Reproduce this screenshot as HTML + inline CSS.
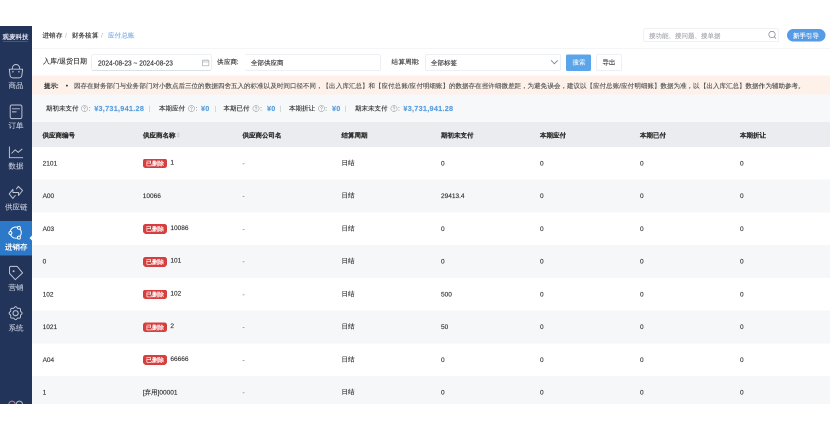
<!DOCTYPE html>
<html><head><meta charset="utf-8"><style>
*{margin:0;padding:0;box-sizing:border-box}
html,body{width:830px;height:430px;background:#fff;overflow:hidden}
#root{position:absolute;left:0;top:0;width:1660px;height:860px;transform:scale(0.5);transform-origin:0 0;will-change:transform;font-family:"Liberation Sans",sans-serif;color:#333}
#root div{position:absolute}
.t{white-space:nowrap;line-height:1;-webkit-text-stroke:0.3px currentColor}
</style></head><body><div id="root">
<div style="left:0.00px;top:52.00px;width:64.00px;height:756.00px;background:#22345a"></div>
<div style="left:0.00px;top:441.60px;width:64.00px;height:69.40px;background:#2b79c8"></div>
<div style="left:58.80px;top:471.20px;width:0;height:0;border-top:5.60px solid transparent;border-bottom:5.60px solid transparent;border-right:5.40px solid #fff"></div>
<div class="t" style="left:4.80px;top:68.00px;font-size:12.5px;color:#e2e6ee;font-weight:bold;letter-spacing:0.2px;-webkit-text-stroke:0">观麦科技</div>
<div style="left:5.60px;top:82.60px;width:50.00px;height:1.00px;background:#6c7896"></div>
<div class="t" style="left:0;top:162.60px;width:64.00px;text-align:center;font-size:15px;-webkit-text-stroke:0.15px currentColor;color:#ccd2de;font-weight:500">商品</div>
<div class="t" style="left:0;top:243.40px;width:64.00px;text-align:center;font-size:15px;-webkit-text-stroke:0.15px currentColor;color:#ccd2de;font-weight:500">订单</div>
<div class="t" style="left:0;top:324.20px;width:64.00px;text-align:center;font-size:15px;-webkit-text-stroke:0.15px currentColor;color:#ccd2de;font-weight:500">数据</div>
<div class="t" style="left:0;top:406.20px;width:64.00px;text-align:center;font-size:15px;-webkit-text-stroke:0.15px currentColor;color:#ccd2de;font-weight:500">供应链</div>
<div class="t" style="left:0;top:485.80px;width:64.00px;text-align:center;font-size:15px;-webkit-text-stroke:0.15px currentColor;color:#fff;-webkit-text-stroke:0.5px currentColor">进销存</div>
<div class="t" style="left:0;top:567.40px;width:64.00px;text-align:center;font-size:15px;-webkit-text-stroke:0.15px currentColor;color:#ccd2de;font-weight:500">营销</div>
<div class="t" style="left:0;top:648.40px;width:64.00px;text-align:center;font-size:15px;-webkit-text-stroke:0.15px currentColor;color:#ccd2de;font-weight:500">系统</div>
<svg style="position:absolute;left:0;top:0" width="64" height="860" viewBox="0 0 32 430" fill="none" stroke="#c3c9d6" stroke-width="0.95" stroke-linecap="round" stroke-linejoin="round">
 <path d="M12.3 69 V68.2 A3.7 3.7 0 0 1 19.7 68.2 V69"/>
 <path d="M9.3 69.2 H22.6 L21.9 75 Q21.6 77.9 18.8 77.9 H13.1 Q10.3 77.9 10 75 Z"/>
 <circle cx="12.9" cy="71.8" r="0.75" fill="#c3c9d6" stroke="none"/>
 <circle cx="18.9" cy="71.8" r="0.75" fill="#c3c9d6" stroke="none"/>
 <rect x="10.2" y="105" width="11.7" height="13.6" rx="1.6"/>
 <path d="M12.3 108.8 H19.6 M12.3 111.9 H16.2"/>
 <path d="M9.4 146.9 V157.7 H22.7"/>
 <path d="M11.8 153.2 L15.2 149.8 L18.2 152.4 L22 149.1"/>
 <path d="M16.5 188.9 L18.3 186.4 L22.6 190.5 L18.5 195.4 L18.5 192.5 L12.9 192.5 L12.9 189.3 L9.2 193.9 L12.9 198.4 L15.3 195.5"/>
 <path d="M9.5 267.8 Q9.5 266.4 10.9 266.4 H17.2 L22.6 272.9 L15.3 279.7 L9.6 273.5 Z"/>
 <circle cx="13.6" cy="271.2" r="0.95" fill="#c3c9d6" stroke="none"/>
 <path d="M15.60 306.70 L15.85 306.73 L16.10 306.83 L16.33 306.99 L16.55 307.19 L16.75 307.41 L16.93 307.64 L17.11 307.86 L17.27 308.05 L17.44 308.20 L17.63 308.30 L17.83 308.36 L18.06 308.38 L18.31 308.36 L18.59 308.33 L18.88 308.29 L19.18 308.28 L19.47 308.29 L19.75 308.34 L19.99 308.45 L20.20 308.60 L20.35 308.81 L20.46 309.05 L20.51 309.33 L20.52 309.62 L20.51 309.92 L20.47 310.21 L20.44 310.49 L20.42 310.74 L20.44 310.97 L20.50 311.17 L20.60 311.36 L20.75 311.53 L20.94 311.69 L21.16 311.87 L21.39 312.05 L21.61 312.25 L21.81 312.47 L21.97 312.70 L22.07 312.95 L22.10 313.20 L22.07 313.45 L21.97 313.70 L21.81 313.93 L21.61 314.15 L21.39 314.35 L21.16 314.53 L20.94 314.71 L20.75 314.87 L20.60 315.04 L20.50 315.23 L20.44 315.43 L20.42 315.66 L20.44 315.91 L20.47 316.19 L20.51 316.48 L20.52 316.78 L20.51 317.07 L20.46 317.35 L20.35 317.59 L20.20 317.80 L19.99 317.95 L19.75 318.06 L19.47 318.11 L19.18 318.12 L18.88 318.11 L18.59 318.07 L18.31 318.04 L18.06 318.02 L17.83 318.04 L17.63 318.10 L17.44 318.20 L17.27 318.35 L17.11 318.54 L16.93 318.76 L16.75 318.99 L16.55 319.21 L16.33 319.41 L16.10 319.57 L15.85 319.67 L15.60 319.70 L15.35 319.67 L15.10 319.57 L14.87 319.41 L14.65 319.21 L14.45 318.99 L14.27 318.76 L14.09 318.54 L13.93 318.35 L13.76 318.20 L13.57 318.10 L13.37 318.04 L13.14 318.02 L12.89 318.04 L12.61 318.07 L12.32 318.11 L12.02 318.12 L11.73 318.11 L11.45 318.06 L11.21 317.95 L11.00 317.80 L10.85 317.59 L10.74 317.35 L10.69 317.07 L10.68 316.78 L10.69 316.48 L10.73 316.19 L10.76 315.91 L10.78 315.66 L10.76 315.43 L10.70 315.23 L10.60 315.04 L10.45 314.87 L10.26 314.71 L10.04 314.53 L9.81 314.35 L9.59 314.15 L9.39 313.93 L9.23 313.70 L9.13 313.45 L9.10 313.20 L9.13 312.95 L9.23 312.70 L9.39 312.47 L9.59 312.25 L9.81 312.05 L10.04 311.87 L10.26 311.69 L10.45 311.53 L10.60 311.36 L10.70 311.17 L10.76 310.97 L10.78 310.74 L10.76 310.49 L10.73 310.21 L10.69 309.92 L10.68 309.62 L10.69 309.33 L10.74 309.05 L10.85 308.81 L11.00 308.60 L11.21 308.45 L11.45 308.34 L11.73 308.29 L12.02 308.28 L12.32 308.29 L12.61 308.33 L12.89 308.36 L13.14 308.38 L13.37 308.36 L13.57 308.30 L13.76 308.20 L13.93 308.05 L14.09 307.86 L14.27 307.64 L14.45 307.41 L14.65 307.19 L14.87 306.99 L15.10 306.83 L15.35 306.73Z"/>
 <circle cx="15.6" cy="313.2" r="2.6" stroke-width="1.05"/>
 <circle cx="12" cy="404.2" r="3.1" stroke="#b98a9a"/>
 <circle cx="19.4" cy="404.2" r="3.1" stroke="#b9c4c0"/>
</svg>
<svg style="position:absolute;left:0;top:0" width="64" height="860" viewBox="0 0 32 430" fill="none" stroke="#fff" stroke-width="0.95">
 <circle cx="15.7" cy="232.6" r="5.6"/>
 <circle cx="18.9" cy="227.8" r="1.5" fill="#2b79c8"/>
 <circle cx="10.4" cy="233" r="1.5" fill="#2b79c8"/>
 <circle cx="18.9" cy="237.6" r="1.5" fill="#2b79c8"/>
</svg>
<div style="left:64.00px;top:96.00px;width:1596.00px;height:1.20px;background:#e9ebef"></div>
<div class="t" style="left:85.00px;top:64.40px;font-size:13px;letter-spacing:0.3px;color:#333">进销存<span style="color:#c0c4cc;margin:0 10px 0 5px">/</span>财务核算<span style="color:#c0c4cc;margin:0 10px 0 5px">/</span><span style="color:#7eb0e6">应付总账</span></div>
<div style="left:1286.80px;top:56.80px;width:271.20px;height:27.00px;border:1px solid #dfe2e8;border-radius:3px;background:#fff"></div>
<div class="t" style="left:1298.40px;top:64.80px;font-size:13px;color:#a8abb2">搜功能、搜问题、搜单据</div>
<svg style="position:absolute;left:1532.00px;top:58.00px" width="24" height="24" viewBox="0 0 12 12" fill="none" stroke="#8a8f99" stroke-width="0.8" stroke-linecap="round"><circle cx="6" cy="5.5" r="3.2"/><path d="M8.3 7.8 L9.8 9.4"/></svg>
<div style="left:1574.40px;top:58.00px;width:77.00px;height:25.40px;background:#559be6;border-radius:13px"></div>
<div class="t" style="left:1586.00px;top:64.80px;font-size:13.4px;color:#fff">新手引导</div>
<div class="t" style="left:86.20px;top:116.40px;font-size:13.5px;color:#333">入库/退货日期</div>
<div style="left:183.40px;top:108.60px;width:240.00px;height:32.20px;border:1px solid #dcdfe6;border-radius:3px;background:#fff"></div>
<div class="t" style="left:195.60px;top:117.80px;font-size:15.5px;color:#333;transform:scaleX(0.85);transform-origin:0 0">2024-08-23 ~ 2024-08-23</div>
<svg style="position:absolute;left:403.00px;top:118.00px" width="16" height="16" viewBox="0 0 8 8" fill="none" stroke="#9aa0a8" stroke-width="0.6"><rect x="0.8" y="1.2" width="6.6" height="5.6" rx="0.6"/><path d="M0.8 3 H7.4 M2.6 0.5 V1.8 M5.6 0.5 V1.8"/></svg>
<div class="t" style="left:434.40px;top:117.00px;font-size:13px;color:#333;letter-spacing:0.2px">供应商<span style='margin-left:-1px'>:</span></div>
<div style="left:489.20px;top:108.60px;width:272.80px;height:32.20px;border:1px solid #dcdfe6;border-radius:3px;background:#fff"></div>
<div class="t" style="left:501.80px;top:118.80px;font-size:13px;color:#333">全部供应商</div>
<div class="t" style="left:783.40px;top:117.00px;font-size:13px;color:#333;letter-spacing:0.2px">结算周期<span style='margin-left:-1px'>:</span></div>
<div style="left:849.60px;top:108.60px;width:272.40px;height:32.20px;border:1px solid #dcdfe6;border-radius:3px;background:#fff"></div>
<div class="t" style="left:861.80px;top:118.80px;font-size:13px;color:#333">全部标签</div>
<svg style="position:absolute;left:1100.60px;top:117.00px" width="16" height="14" viewBox="0 0 8 7" fill="none" stroke="#7d828c" stroke-width="0.85" stroke-linecap="round" stroke-linejoin="round"><path d="M0.8 2.1 L3.9 5.3 L7 2.1"/></svg>
<div style="left:1131.80px;top:108.80px;width:50.20px;height:33.20px;background:#5aa5ea;border-radius:3px"></div>
<div class="t" style="left:1144.60px;top:118.40px;font-size:13px;color:#f4f8fd;-webkit-text-stroke:0.15px currentColor">搜索</div>
<div style="left:1192.60px;top:108.80px;width:51.40px;height:33.20px;border:1px solid #dcdfe6;border-radius:3px;background:#fff"></div>
<div class="t" style="left:1205.00px;top:118.40px;font-size:13px;color:#333">导出</div>
<div style="left:64.00px;top:151.00px;width:1596.00px;height:38.00px;background:#fdf1ea"></div>
<div class="t" style="left:87.60px;top:165.40px;font-size:13px;color:#333;-webkit-text-stroke:0.6px currentColor">提示:</div>
<div class="t" style="left:131.60px;top:165.40px;font-size:13px;color:#333">•</div>
<div class="t" style="left:147.60px;top:165.40px;font-size:13px;color:#555;letter-spacing:0.1px">因存在财务部门与业务部门对小数点后三位的数据四舍五入的标准以及时间口径不同，【出入库汇总】和【应付总账/应付明细账】的数据存在些许细微差距，为避免误会，建议以【应付总账/应付明细账】数据为准，以【出入库汇总】数据作为辅助参考。</div>
<div style="left:64.00px;top:189.00px;width:1596.00px;height:54.60px;background:#f7f8fa"></div>
<div class="t" style="left:91.60px;top:210.00px;font-size:13px;color:#333">期初未支付</div>
<svg style="position:absolute;left:162.00px;top:209.60px" width="14" height="14" viewBox="0 0 7 7" fill="none" stroke="#8c8c8c" stroke-width="0.5"><circle cx="3.5" cy="3.5" r="3.1"/><path d="M2.55 2.75 Q2.55 1.75 3.5 1.75 Q4.45 1.75 4.45 2.6 Q4.45 3.2 3.5 3.55 V4.25" stroke-linecap="round"/><circle cx="3.5" cy="5.25" r="0.33" fill="#8c8c8c" stroke="none"/></svg>
<div class="t" style="left:177.00px;top:210.00px;font-size:13px;color:#444;-webkit-text-stroke:0">:</div>
<div class="t" style="left:188.40px;top:209.60px;font-size:14.5px;color:#5a9edf;font-weight:bold;letter-spacing:0.55px">¥3,731,941.28</div>
<div class="t" style="left:297.40px;top:210.00px;font-size:13px;color:#c8ccd2">|</div>
<div class="t" style="left:318.40px;top:210.00px;font-size:13px;color:#333">本期应付</div>
<svg style="position:absolute;left:376.40px;top:209.60px" width="14" height="14" viewBox="0 0 7 7" fill="none" stroke="#8c8c8c" stroke-width="0.5"><circle cx="3.5" cy="3.5" r="3.1"/><path d="M2.55 2.75 Q2.55 1.75 3.5 1.75 Q4.45 1.75 4.45 2.6 Q4.45 3.2 3.5 3.55 V4.25" stroke-linecap="round"/><circle cx="3.5" cy="5.25" r="0.33" fill="#8c8c8c" stroke="none"/></svg>
<div class="t" style="left:391.40px;top:210.00px;font-size:13px;color:#444;-webkit-text-stroke:0">:</div>
<div class="t" style="left:402.00px;top:209.60px;font-size:14.5px;color:#5a9edf;font-weight:bold;letter-spacing:0.55px">¥0</div>
<div class="t" style="left:429.60px;top:210.00px;font-size:13px;color:#c8ccd2">|</div>
<div class="t" style="left:447.20px;top:210.00px;font-size:13px;color:#333">本期已付</div>
<svg style="position:absolute;left:505.20px;top:209.60px" width="14" height="14" viewBox="0 0 7 7" fill="none" stroke="#8c8c8c" stroke-width="0.5"><circle cx="3.5" cy="3.5" r="3.1"/><path d="M2.55 2.75 Q2.55 1.75 3.5 1.75 Q4.45 1.75 4.45 2.6 Q4.45 3.2 3.5 3.55 V4.25" stroke-linecap="round"/><circle cx="3.5" cy="5.25" r="0.33" fill="#8c8c8c" stroke="none"/></svg>
<div class="t" style="left:520.20px;top:210.00px;font-size:13px;color:#444;-webkit-text-stroke:0">:</div>
<div class="t" style="left:534.00px;top:209.60px;font-size:14.5px;color:#5a9edf;font-weight:bold;letter-spacing:0.55px">¥0</div>
<div class="t" style="left:559.20px;top:210.00px;font-size:13px;color:#c8ccd2">|</div>
<div class="t" style="left:577.60px;top:210.00px;font-size:13px;color:#333">本期折让</div>
<svg style="position:absolute;left:635.60px;top:209.60px" width="14" height="14" viewBox="0 0 7 7" fill="none" stroke="#8c8c8c" stroke-width="0.5"><circle cx="3.5" cy="3.5" r="3.1"/><path d="M2.55 2.75 Q2.55 1.75 3.5 1.75 Q4.45 1.75 4.45 2.6 Q4.45 3.2 3.5 3.55 V4.25" stroke-linecap="round"/><circle cx="3.5" cy="5.25" r="0.33" fill="#8c8c8c" stroke="none"/></svg>
<div class="t" style="left:650.60px;top:210.00px;font-size:13px;color:#444;-webkit-text-stroke:0">:</div>
<div class="t" style="left:664.00px;top:209.60px;font-size:14.5px;color:#5a9edf;font-weight:bold;letter-spacing:0.55px">¥0</div>
<div class="t" style="left:689.20px;top:210.00px;font-size:13px;color:#c8ccd2">|</div>
<div class="t" style="left:710.00px;top:210.00px;font-size:13px;color:#333">期末未支付</div>
<svg style="position:absolute;left:781.00px;top:209.60px" width="14" height="14" viewBox="0 0 7 7" fill="none" stroke="#8c8c8c" stroke-width="0.5"><circle cx="3.5" cy="3.5" r="3.1"/><path d="M2.55 2.75 Q2.55 1.75 3.5 1.75 Q4.45 1.75 4.45 2.6 Q4.45 3.2 3.5 3.55 V4.25" stroke-linecap="round"/><circle cx="3.5" cy="5.25" r="0.33" fill="#8c8c8c" stroke="none"/></svg>
<div class="t" style="left:796.00px;top:210.00px;font-size:13px;color:#444;-webkit-text-stroke:0">:</div>
<div class="t" style="left:806.80px;top:209.60px;font-size:14.5px;color:#5a9edf;font-weight:bold;letter-spacing:0.55px">¥3,731,941.28</div>
<div style="left:64.00px;top:243.60px;width:1596.00px;height:50.20px;background:#eaecf0"></div>
<div class="t" style="left:85.20px;top:263.60px;font-size:13px;color:#333;font-weight:bold">供应商编号</div>
<div class="t" style="left:285.60px;top:263.60px;font-size:13px;color:#333;font-weight:bold">供应商名称</div>
<div class="t" style="left:485.00px;top:263.60px;font-size:13px;color:#333;font-weight:bold">供应商公司名</div>
<div class="t" style="left:683.00px;top:263.60px;font-size:13px;color:#333;font-weight:bold">结算周期</div>
<div class="t" style="left:882.00px;top:263.60px;font-size:13px;color:#333;font-weight:bold">期初未支付</div>
<div class="t" style="left:1080.00px;top:263.60px;font-size:13px;color:#333;font-weight:bold">本期应付</div>
<div class="t" style="left:1280.00px;top:263.60px;font-size:13px;color:#333;font-weight:bold">本期已付</div>
<div class="t" style="left:1480.00px;top:263.60px;font-size:13px;color:#333;font-weight:bold">本期折让</div>
<svg style="position:absolute;left:352.80px;top:263.60px" width="8" height="12" viewBox="0 0 4 6" fill="#c4c7cd"><path d="M1.8 0.3 L3.3 2.5 H0.3Z M1.8 5.7 L3.3 3.5 H0.3Z"/></svg>
<div class="t" style="left:85.20px;top:319.80px;font-size:13px;color:#333">2101</div>
<div style="left:285.60px;top:317.20px;width:48.20px;height:19.00px;background:#d63f3e;border-radius:5px"></div>
<div class="t" style="left:291.80px;top:321.20px;font-size:12px;color:#fff;font-weight:bold;-webkit-text-stroke:0">已删除</div>
<div class="t" style="left:340.80px;top:317.80px;font-size:13px;color:#333">1</div>
<div class="t" style="left:485.00px;top:319.80px;font-size:13px;color:#777">-</div>
<div class="t" style="left:683.00px;top:318.60px;font-size:13px;color:#333">日结</div>
<div class="t" style="left:882.00px;top:319.80px;font-size:13px;color:#333">0</div>
<div class="t" style="left:1080.00px;top:319.80px;font-size:13px;color:#333">0</div>
<div class="t" style="left:1280.00px;top:319.80px;font-size:13px;color:#333">0</div>
<div class="t" style="left:1480.00px;top:319.80px;font-size:13px;color:#333">0</div>
<div style="left:64.00px;top:359.30px;width:1596.00px;height:65.50px;background:#f6f7f9"></div>
<div class="t" style="left:85.20px;top:385.30px;font-size:13px;color:#333">A00</div>
<div class="t" style="left:285.60px;top:385.30px;font-size:13px;color:#333">10066</div>
<div class="t" style="left:485.00px;top:385.30px;font-size:13px;color:#777">-</div>
<div class="t" style="left:683.00px;top:384.10px;font-size:13px;color:#333">日结</div>
<div class="t" style="left:882.00px;top:385.30px;font-size:13px;color:#333">29413.4</div>
<div class="t" style="left:1080.00px;top:385.30px;font-size:13px;color:#333">0</div>
<div class="t" style="left:1280.00px;top:385.30px;font-size:13px;color:#333">0</div>
<div class="t" style="left:1480.00px;top:385.30px;font-size:13px;color:#333">0</div>
<div class="t" style="left:85.20px;top:450.80px;font-size:13px;color:#333">A03</div>
<div style="left:285.60px;top:448.20px;width:48.20px;height:19.00px;background:#d63f3e;border-radius:5px"></div>
<div class="t" style="left:291.80px;top:452.20px;font-size:12px;color:#fff;font-weight:bold;-webkit-text-stroke:0">已删除</div>
<div class="t" style="left:340.80px;top:448.80px;font-size:13px;color:#333">10086</div>
<div class="t" style="left:485.00px;top:450.80px;font-size:13px;color:#777">-</div>
<div class="t" style="left:683.00px;top:449.60px;font-size:13px;color:#333">日结</div>
<div class="t" style="left:882.00px;top:450.80px;font-size:13px;color:#333">0</div>
<div class="t" style="left:1080.00px;top:450.80px;font-size:13px;color:#333">0</div>
<div class="t" style="left:1280.00px;top:450.80px;font-size:13px;color:#333">0</div>
<div class="t" style="left:1480.00px;top:450.80px;font-size:13px;color:#333">0</div>
<div style="left:64.00px;top:490.30px;width:1596.00px;height:65.50px;background:#f6f7f9"></div>
<div class="t" style="left:85.20px;top:516.30px;font-size:13px;color:#333">0</div>
<div style="left:285.60px;top:513.70px;width:48.20px;height:19.00px;background:#d63f3e;border-radius:5px"></div>
<div class="t" style="left:291.80px;top:517.70px;font-size:12px;color:#fff;font-weight:bold;-webkit-text-stroke:0">已删除</div>
<div class="t" style="left:340.80px;top:514.30px;font-size:13px;color:#333">101</div>
<div class="t" style="left:485.00px;top:516.30px;font-size:13px;color:#777">-</div>
<div class="t" style="left:683.00px;top:515.10px;font-size:13px;color:#333">日结</div>
<div class="t" style="left:882.00px;top:516.30px;font-size:13px;color:#333">0</div>
<div class="t" style="left:1080.00px;top:516.30px;font-size:13px;color:#333">0</div>
<div class="t" style="left:1280.00px;top:516.30px;font-size:13px;color:#333">0</div>
<div class="t" style="left:1480.00px;top:516.30px;font-size:13px;color:#333">0</div>
<div class="t" style="left:85.20px;top:581.80px;font-size:13px;color:#333">102</div>
<div style="left:285.60px;top:579.20px;width:48.20px;height:19.00px;background:#d63f3e;border-radius:5px"></div>
<div class="t" style="left:291.80px;top:583.20px;font-size:12px;color:#fff;font-weight:bold;-webkit-text-stroke:0">已删除</div>
<div class="t" style="left:340.80px;top:579.80px;font-size:13px;color:#333">102</div>
<div class="t" style="left:485.00px;top:581.80px;font-size:13px;color:#777">-</div>
<div class="t" style="left:683.00px;top:580.60px;font-size:13px;color:#333">日结</div>
<div class="t" style="left:882.00px;top:581.80px;font-size:13px;color:#333">500</div>
<div class="t" style="left:1080.00px;top:581.80px;font-size:13px;color:#333">0</div>
<div class="t" style="left:1280.00px;top:581.80px;font-size:13px;color:#333">0</div>
<div class="t" style="left:1480.00px;top:581.80px;font-size:13px;color:#333">0</div>
<div style="left:64.00px;top:621.30px;width:1596.00px;height:65.50px;background:#f6f7f9"></div>
<div class="t" style="left:85.20px;top:647.30px;font-size:13px;color:#333">1021</div>
<div style="left:285.60px;top:644.70px;width:48.20px;height:19.00px;background:#d63f3e;border-radius:5px"></div>
<div class="t" style="left:291.80px;top:648.70px;font-size:12px;color:#fff;font-weight:bold;-webkit-text-stroke:0">已删除</div>
<div class="t" style="left:340.80px;top:645.30px;font-size:13px;color:#333">2</div>
<div class="t" style="left:485.00px;top:647.30px;font-size:13px;color:#777">-</div>
<div class="t" style="left:683.00px;top:646.10px;font-size:13px;color:#333">日结</div>
<div class="t" style="left:882.00px;top:647.30px;font-size:13px;color:#333">50</div>
<div class="t" style="left:1080.00px;top:647.30px;font-size:13px;color:#333">0</div>
<div class="t" style="left:1280.00px;top:647.30px;font-size:13px;color:#333">0</div>
<div class="t" style="left:1480.00px;top:647.30px;font-size:13px;color:#333">0</div>
<div class="t" style="left:85.20px;top:712.80px;font-size:13px;color:#333">A04</div>
<div style="left:285.60px;top:710.20px;width:48.20px;height:19.00px;background:#d63f3e;border-radius:5px"></div>
<div class="t" style="left:291.80px;top:714.20px;font-size:12px;color:#fff;font-weight:bold;-webkit-text-stroke:0">已删除</div>
<div class="t" style="left:340.80px;top:710.80px;font-size:13px;color:#333">66666</div>
<div class="t" style="left:485.00px;top:712.80px;font-size:13px;color:#777">-</div>
<div class="t" style="left:683.00px;top:711.60px;font-size:13px;color:#333">日结</div>
<div class="t" style="left:882.00px;top:712.80px;font-size:13px;color:#333">0</div>
<div class="t" style="left:1080.00px;top:712.80px;font-size:13px;color:#333">0</div>
<div class="t" style="left:1280.00px;top:712.80px;font-size:13px;color:#333">0</div>
<div class="t" style="left:1480.00px;top:712.80px;font-size:13px;color:#333">0</div>
<div style="left:64.00px;top:752.30px;width:1596.00px;height:65.50px;background:#f6f7f9"></div>
<div class="t" style="left:85.20px;top:778.30px;font-size:13px;color:#333">1</div>
<div class="t" style="left:285.60px;top:778.30px;font-size:13px;color:#333">[弃用]00001</div>
<div class="t" style="left:485.00px;top:778.30px;font-size:13px;color:#777">-</div>
<div class="t" style="left:683.00px;top:777.10px;font-size:13px;color:#333">日结</div>
<div class="t" style="left:882.00px;top:778.30px;font-size:13px;color:#333">0</div>
<div class="t" style="left:1080.00px;top:778.30px;font-size:13px;color:#333">0</div>
<div class="t" style="left:1280.00px;top:778.30px;font-size:13px;color:#333">0</div>
<div class="t" style="left:1480.00px;top:778.30px;font-size:13px;color:#333">0</div>
<div style="left:0.00px;top:808.00px;width:1660.00px;height:52.00px;background:#fff"></div>
</div></body></html>
